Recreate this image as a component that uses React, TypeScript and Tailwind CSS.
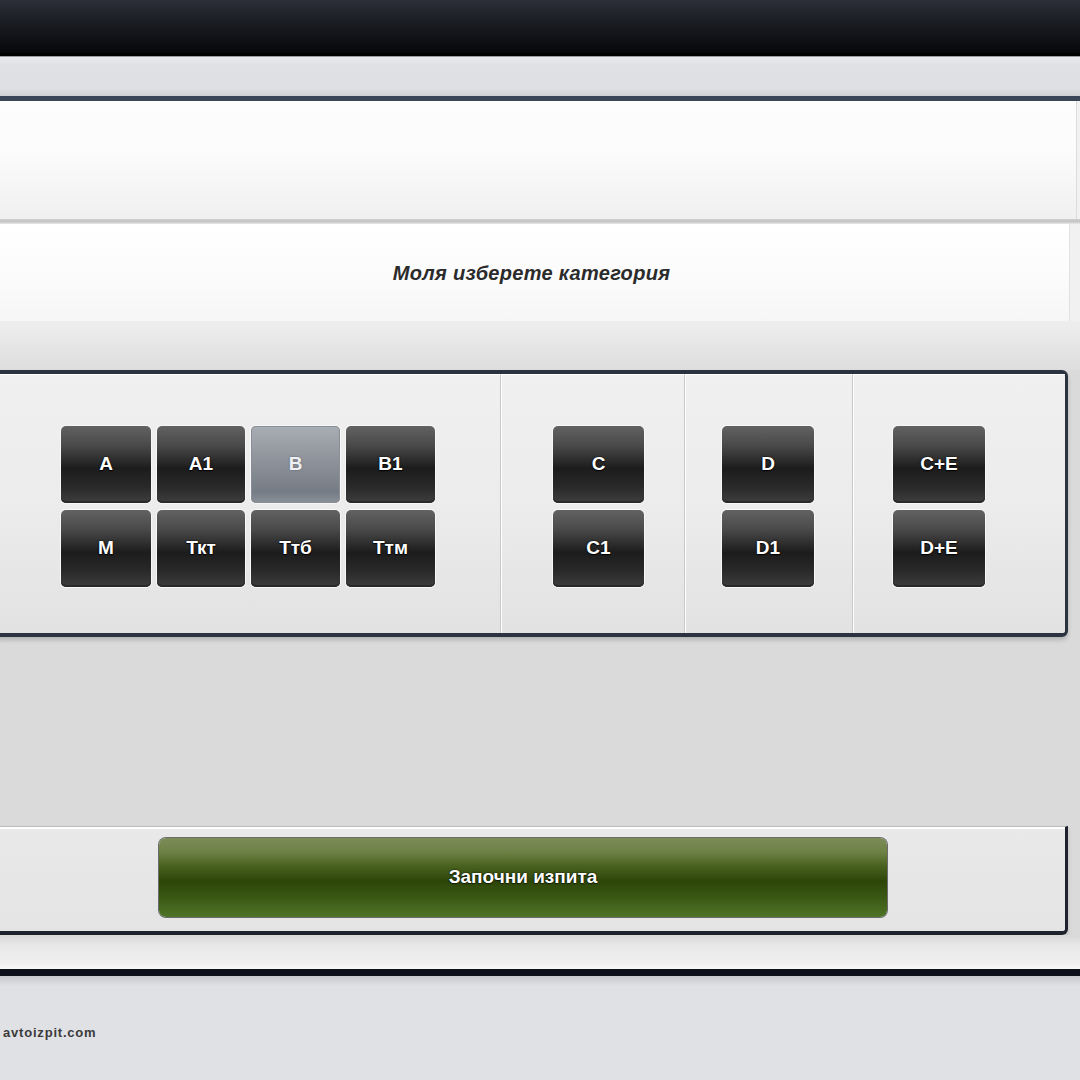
import React from "react";

const darkBtn =
  "flex items-center justify-center rounded-[5px] text-white font-bold text-[19px] bg-[linear-gradient(to_bottom,#626262_0%,#4a4a4a_25%,#1c1c1c_55%,#2a2a2a_80%,#3e3e3e_100%)] shadow-[0_0_0_1px_#f7f7f7,inset_0_-2px_0_#2a2a2a] [text-shadow:0_0_2px_#000,0_1px_1px_#000]";
const selBtn =
  "flex items-center justify-center rounded-[5px] text-[#eef0f3] font-bold text-[19px] bg-[linear-gradient(to_bottom,#a9adb4_0%,#8e939b_45%,#767c85_85%,#8a9098_100%)] shadow-[0_0_0_1px_#f7f7f7,inset_0_0_0_1px_#8a8f96] [text-shadow:0_0_2px_#5a5f66]";

function Btn({ label, sel = false, w = 89 }: { label: string; sel?: boolean; w?: number }) {
  return (
    <div className={sel ? selBtn : darkBtn} style={{ width: w, height: 77 }}>
      {label}
    </div>
  );
}

export default function App() {
  return (
    <div className="w-[1080px] h-[1080px] overflow-hidden bg-[#e0e1e5] font-['Liberation_Sans',Arial,sans-serif]">
      {/* top black bar */}
      <div className="h-[53px] bg-[linear-gradient(to_bottom,#2c2f39_0%,#1c1e24_40%,#060709_100%)]" />
      <div className="h-[3px] bg-[#000]" />
      <div className="h-[1px] bg-[#9a9ca2]" />
      <div className="h-[39px] bg-[linear-gradient(to_bottom,#e9eaed_0%,#e0e1e5_20%,#dfe0e4_80%,#cfd0d4_100%)]" />

      {/* main container */}
      <div className="border-t-[5px] border-b-[7px] border-t-[#3a4558] border-b-[#0e1119] bg-[#dadada]">
        {/* panel 1 */}
        <div className="bg-[#f2f2f2]">
          <div className="mr-[3px] h-[118px] border-r border-[#dcdcdc] bg-[linear-gradient(to_bottom,#fdfdfd_0%,#fcfcfc_40%,#f0f0f0_100%)]" />
        </div>
        <div className="h-[5px] bg-[linear-gradient(to_bottom,#d0d0d0,#c4c4c4,#e8e8e8)]" />
        {/* panel 2 */}
        <div className="bg-[#f1f1f1]">
          <div className="mr-[10px] h-[97px] border-r border-[#e2e2e2] bg-[linear-gradient(to_bottom,#ffffff_0%,#fbfbfb_60%,#f6f6f6_100%)] flex items-center justify-center pr-[6px]">
            <span className="text-[20px] font-bold italic text-[#2b2b2b] tracking-[0.3px]">
              Моля изберете категория
            </span>
          </div>
        </div>
        <div className="h-[49px] bg-[linear-gradient(to_bottom,#eeeeee_0%,#e6e6e6_50%,#dddddd_100%)]" />

        {/* category box */}
        <div className="-ml-[4px] mr-[12px] h-[267px] rounded-r-[6px] border-[3px] border-t-[4px] border-b-[4px] border-[#2b3240] bg-[linear-gradient(to_bottom,#f0f0f0_0%,#ececec_50%,#e2e2e2_100%)] shadow-[0_3px_4px_rgba(0,0,0,0.18)] flex">
          <div className="w-[502px] h-full border-t border-l border-white flex items-center pl-[61px] pt-[4px] border-r border-r-[#c8c8c8]">
            <div className="grid grid-cols-[90px_88px_89px_89px] gap-x-[6px] gap-y-[7px]">
              <Btn label="A" w={90} />
              <Btn label="A1" w={88} />
              <Btn label="B" sel w={89} />
              <Btn label="B1" w={89} />
              <Btn label="M" w={90} />
              <Btn label="Ткт" w={88} />
              <Btn label="Ттб" w={89} />
              <Btn label="Ттм" w={89} />
            </div>
          </div>
          <div className="w-[184px] h-full border-t border-l border-white border-r border-r-[#c8c8c8] flex items-center pl-[51px] pt-[4px]">
            <div className="flex flex-col gap-[7px]">
              <Btn label="C" w={91} />
              <Btn label="C1" w={91} />
            </div>
          </div>
          <div className="w-[168px] h-full border-t border-l border-white border-r border-r-[#c8c8c8] flex items-center pl-[36px] pt-[4px]">
            <div className="flex flex-col gap-[7px]">
              <Btn label="D" w={92} />
              <Btn label="D1" w={92} />
            </div>
          </div>
          <div className="flex-1 h-full border-t border-l border-white flex items-center pl-[39px] pt-[4px]">
            <div className="flex flex-col gap-[7px]">
              <Btn label="C+E" w={92} />
              <Btn label="D+E" w={92} />
            </div>
          </div>
        </div>

        <div className="h-[189px]" />

        {/* bottom box */}
        <div className="-ml-[4px] mr-[12px] h-[109px] rounded-br-[6px] border-t border-t-[#bdbdbd] border-r-[3px] border-b-[4px] border-r-[#1d222c] border-b-[#1d222c] bg-[linear-gradient(to_bottom,#e9e9e9_0%,#e4e4e4_100%)] shadow-[0_3px_4px_rgba(0,0,0,0.15)]">
          <div className="h-full border-t-2 border-l-[2px] border-white pl-[161px] pt-[9px]">
            <div className="w-[728px] h-[79px] rounded-[7px] flex items-center justify-center text-white font-bold text-[19px] bg-[linear-gradient(to_bottom,#7c8c58_0%,#6d8145_18%,#4a6220_35%,#2d4608_55%,#3a5814_75%,#4f7426_100%)] shadow-[0_0_0_1px_#6b6b6b] [text-shadow:0_0_2px_#000,0_1px_1px_#1a2a00]">
              Започни изпита
            </div>
          </div>
        </div>

        <div className="h-[34px] bg-[linear-gradient(to_bottom,#d8d8d8_0%,#e8e8e8_30%,#f0f0f0_85%,#fafafa_100%)]" />
      </div>

      {/* footer */}
      <div className="h-[10px] bg-[linear-gradient(to_bottom,#c7c8cc,#e0e1e5)]" />
      <div className="pl-[3px] pt-[37px] text-[13px] font-bold text-[#3a3a3a] tracking-[0.8px]">
        avtoizpit.com
      </div>
    </div>
  );
}
